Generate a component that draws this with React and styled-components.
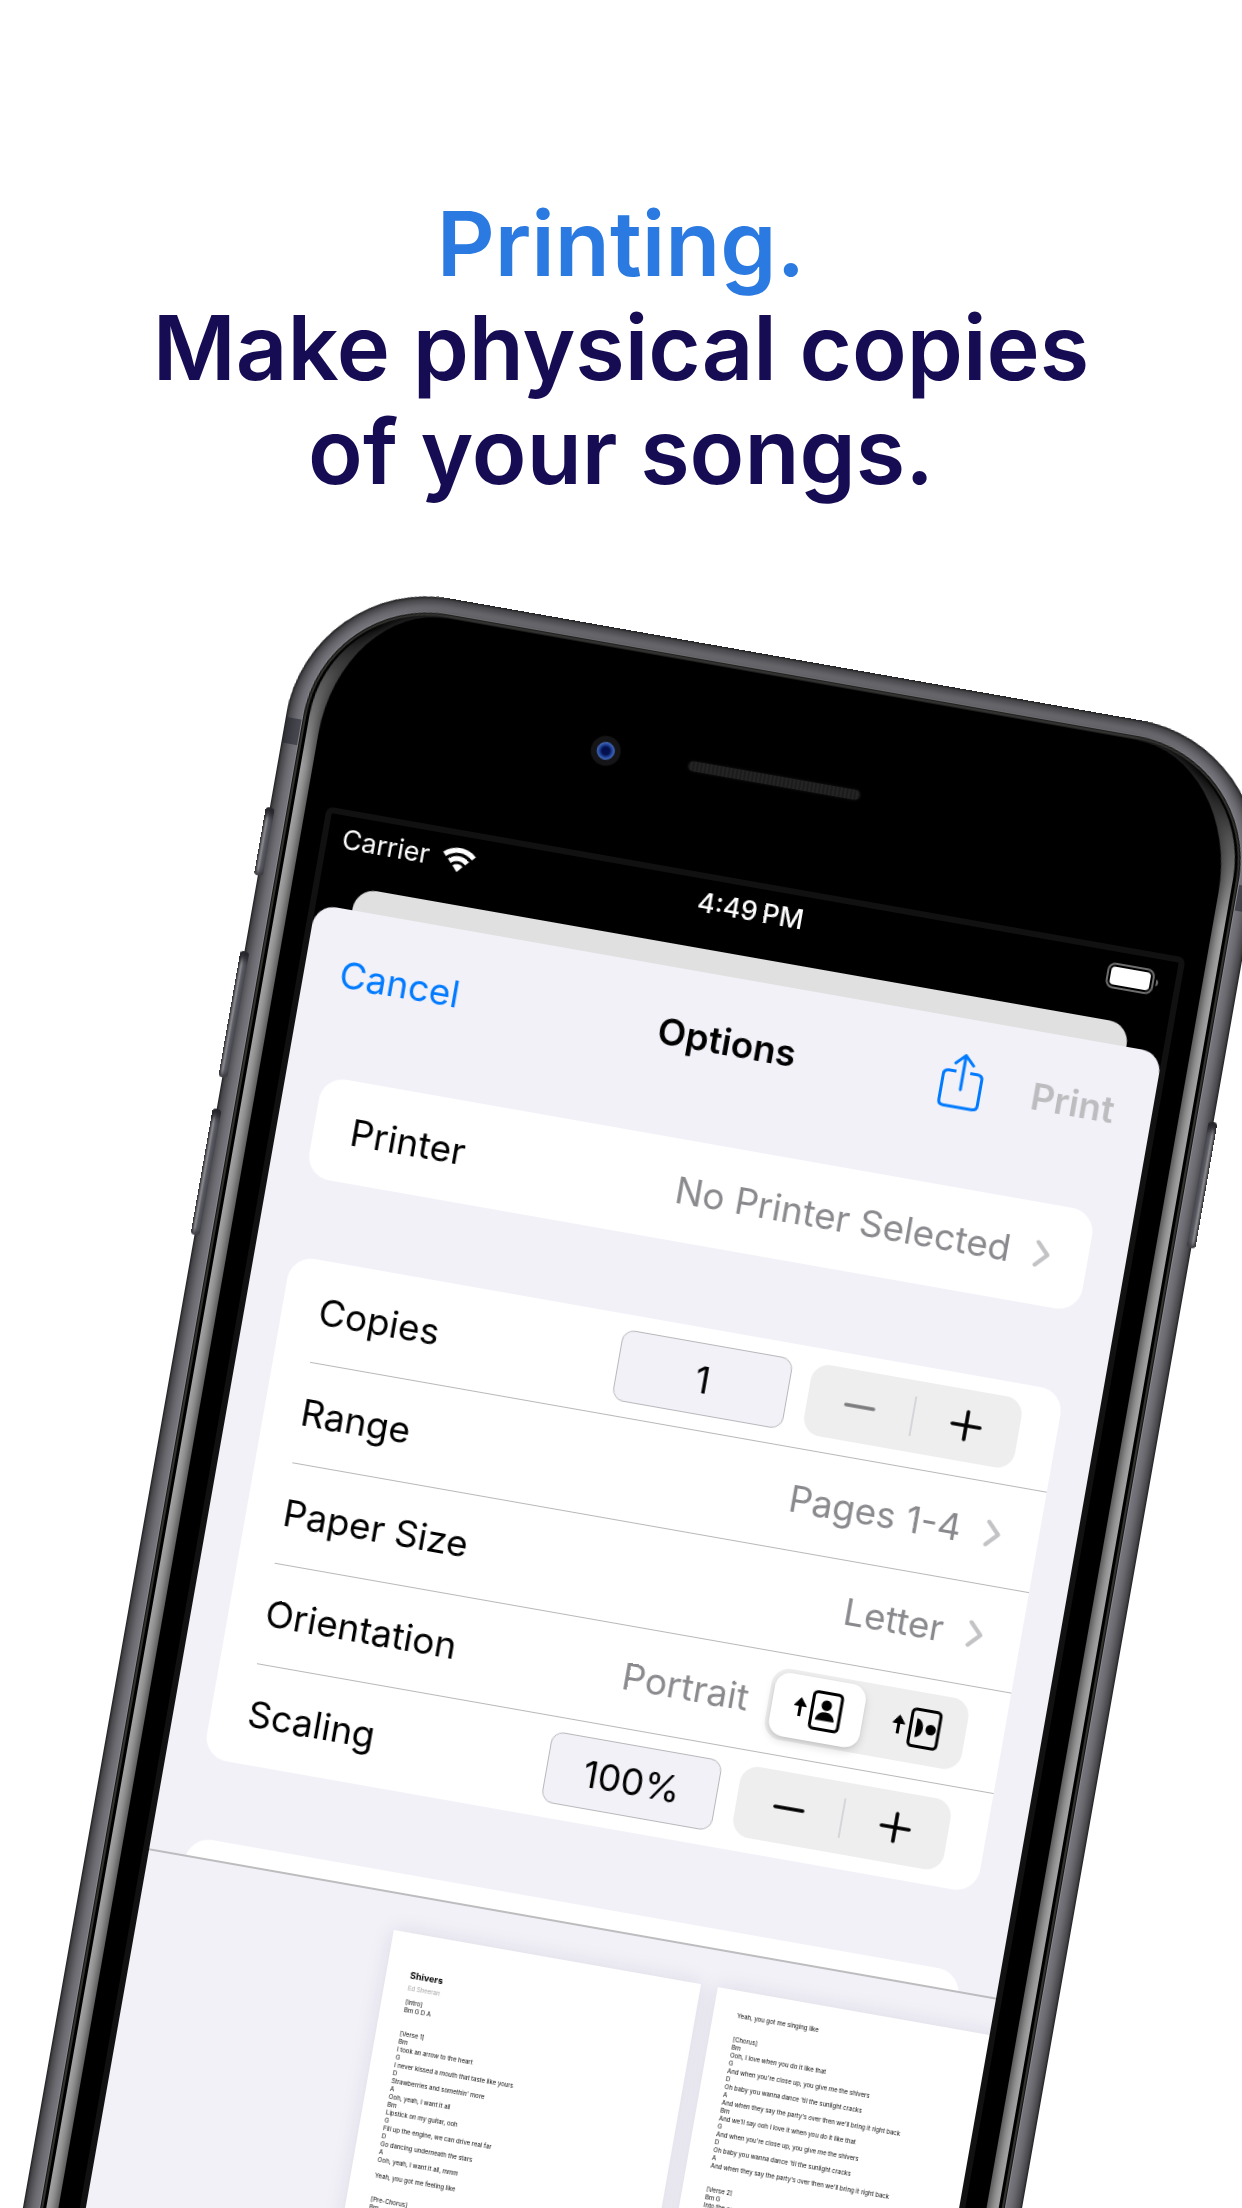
import React, { useState } from "react";
import styled, { createGlobalStyle, css } from "styled-components";

const GlobalStyle = createGlobalStyle`
  *, *::before, *::after { box-sizing: border-box; }
  body { margin: 0; background: #ffffff; }
  button, input { font: inherit; color: inherit; }
`;

const Poster = styled.main`
  display: flex;
  flex-direction: column;
  height: 100vh;
  overflow: hidden;
  background: #ffffff;
  font-family: Inter, "Liberation Sans", sans-serif;
`;

const Headline = styled.h1`
  flex: none;
  height: 574px;
  margin: 0;
  padding-top: 192px;
  color: #160c54;
  font-size: 90px;
  font-weight: 600;
  line-height: 104px;
  text-align: center;
`;

const Accent = styled.span`
  color: #2b7ae1;
`;

const Stage = styled.section`
  flex: 1;
  min-height: 0;
  padding-left: 25%;
`;

/* Device */

const Phone = styled.div`
  position: relative;
  width: 984px;
  height: 2000px;
  transform: rotate(10deg);
  transform-origin: 0 0;
  will-change: transform;
`;

const Metal = styled.div`
  position: relative;
  height: 100%;
  padding: 16px 17px;
  border-radius: 142px;
  background: #7b7a81;
  box-shadow: inset 0 0 2px 1px #1d1d1f, inset 0 0 13px 5px #29292b;
`;

const Rim = styled.div`
  position: relative;
  height: 100%;
  padding: 3px;
  border-radius: 125px;
  border: 1px solid #131312;
  background: #000000;
  box-shadow: inset 0 0 0 2px #33332f, 0 0 0 1px #86858c;
`;

const Reflection = styled.div`
  height: 100%;
  margin: 0 2px;
  padding: 0 12px;
  border-radius: 120px;
  background: linear-gradient(#000000 20px, #555555 80px, #a6a6a6 170px);
`;

const Face = styled.div`
  height: 100%;
  padding: 0 21px;
  border-radius: 108px / 136px;
  background: #000000;
  box-shadow: 0 0 12px 2px #333333;
`;

const AntennaBand = styled.span`
  position: absolute;
  top: 145px;
  ${(p) => p.$side}: 0;
  width: 17px;
  height: 26px;
  background: rgba(38, 40, 48, 0.6);
`;

const SideKey = styled.span`
  position: absolute;
  top: ${(p) => p.$top}px;
  ${(p) => p.$side}: -4px;
  z-index: 1;
  width: 9px;
  height: ${(p) => p.$height}px;
  border-radius: 4px;
  background: linear-gradient(
    ${(p) => (p.$side === "left" ? "to right" : "to left")},
    #2b2b2e, #96969a 3px, #5c5d65 5px, #4a4a52
  );
  box-shadow: inset 0 12px 6px -4px #26262b, inset 0 -6px 5px -3px #3a3a3f;
`;

const Sensors = styled.div`
  display: grid;
  grid-template-columns: 1fr 174px 1fr;
  align-items: center;
  height: 206px;
`;

const Camera = styled.span`
  justify-self: end;
  width: 30px;
  height: 30px;
  margin-right: 69px;
  border: 6px solid #151517;
  border-radius: 50%;
  background: radial-gradient(circle, #04104e 30%, #1d3f92 48%, #4a70c4 70%);
`;

const Speaker = styled.span`
  height: 10px;
  border-radius: 5px;
  background: repeating-linear-gradient(to right, #1c1c1c 0 2px, #242424 2px 4px);
  box-shadow: 0 0 3px #1c1c1c;
`;

const Display = styled.div`
  display: flex;
  flex-direction: column;
  height: 1560px;
  overflow: hidden;
  border: 6px solid #111111;
  border-radius: 7px;
  background: #000000;
`;

/* Status bar */

const StatusBar = styled.div`
  display: grid;
  grid-template-columns: 1fr auto 1fr;
  align-items: center;
  height: 48px;
  margin-bottom: 21px;
  padding: 0 16px 0 15px;
  color: #ffffff;
  font-size: 27px;
  line-height: 32px;
`;

const Carrier = styled.div`
  display: flex;
  align-items: center;
  gap: 12px;
`;

const Clock = styled.time`
  font-weight: 500;
`;

const BatteryIcon = styled.svg`
  justify-self: end;
`;

const PreviousSheet = styled.div`
  flex: none;
  height: 23px;
  margin: 0 37px;
  border-radius: 21px 21px 0 0;
  background: #e0e0e0;
`;

/* Print sheet */

const Sheet = styled.section`
  flex: 1;
  display: flex;
  flex-direction: column;
  min-height: 0;
  border-radius: 21px 21px 0 0;
  background: #f2f1f8;
  color: #000000;
  font-size: 37px;
  line-height: 44px;
`;

const NavBar = styled.header`
  flex: none;
  display: grid;
  grid-template-columns: 1fr auto 1fr;
  align-items: center;
  height: 130px;
  padding: 0 38px 0 36px;
`;

const Title = styled.h2`
  margin: 0;
  font-size: 37px;
  font-weight: 600;
`;

const NavActions = styled.div`
  display: flex;
  align-items: center;
  justify-content: flex-end;
  gap: 50px;
`;

const NavButton = styled.button`
  display: flex;
  justify-self: start;
  padding: 0;
  border: 0;
  background: none;
  color: #007aff;
  font-weight: ${(p) => (p.$strong ? 600 : 400)};

  &:disabled { color: #bdbdc0; }
`;

const Options = styled.form`
  flex: none;
  display: flex;
  flex-direction: column;
  gap: 80px;
  height: 829px;
  padding: 38px 38px 0 37px;
  overflow: hidden;
`;

const Group = styled.div`
  flex: none;
  min-height: 102px;
  padding-left: 37px;
  border-radius: 24px;
  background: #ffffff;
`;

const Row = styled.div`
  display: flex;
  align-items: center;
  justify-content: space-between;
  height: 102px;
  padding-right: 38px;

  & + & { box-shadow: inset 0 1px 0 #b8b8bb; }
`;

const Controls = styled.div`
  display: flex;
  align-items: center;
  gap: 20px;
`;

const Disclosure = styled.button`
  display: flex;
  align-items: center;
  gap: 24px;
  padding: 0;
  border: 0;
  background: none;
  color: #8a8a8e;
`;

const Value = styled.span`
  color: #8a8a8e;
`;

const Field = styled.input`
  width: 173px;
  height: 72px;
  padding: 0;
  border: 1px solid #b8b8bb;
  border-radius: 12px;
  background: #f2f1f8;
  text-align: center;
`;

const pill = css`
  display: flex;
  height: 72px;
  border-radius: 18px;
  background: #eeeeef;
`;

const StepperBox = styled.div`
  ${pill}
  align-items: center;
  width: 214px;
`;

const StepButton = styled.button`
  flex: 1;
  display: flex;
  align-items: center;
  justify-content: center;
  height: 72px;
  padding: 0;
  border: 0;
  background: none;

  &:disabled { color: #7b7b7d; }
`;

const StepDivider = styled.span`
  width: 2px;
  height: 40px;
  background: #d6d5da;
`;

const Segments = styled.div`
  ${pill}
  gap: 8px;
  width: 200px;
  padding: 4px;
`;

const Segment = styled.label`
  flex: 1;
  display: flex;
  align-items: center;
  justify-content: center;
  border-radius: 15px;

  &:has(input:checked) {
    background: #ffffff;
    box-shadow: 0 4px 10px rgba(0, 0, 0, 0.14), 0 1px 3px rgba(0, 0, 0, 0.08);
  }
`;

const HiddenRadio = styled.input`
  appearance: none;
  width: 0;
  height: 0;
  margin: 0;
`;

/* Preview */

const Preview = styled.div`
  flex: 1;
  display: flex;
  gap: 17px;
  min-height: 0;
  padding: 36px 0 0 255px;
  border-top: 2px solid #bdbdbf;
  overflow: hidden;
`;

const Paper = styled.article`
  flex: none;
  width: 312px;
  height: 404px;
  padding: ${(p) => (p.$first ? 36 : 21)}px 24px 0;
  background: #ffffff;
  box-shadow: 0 0 20px rgba(30, 30, 60, 0.1);
  color: #000000;
  font-size: 6px;
  line-height: 8px;
`;

const SongTitle = styled.h3`
  margin: 0;
  font-size: 9px;
  line-height: 12px;
`;

const Artist = styled.p`
  margin: 2px 0 6px;
  color: #a4a4a6;
  font-size: 6px;
  line-height: 9px;
`;

const Lyrics = styled.pre`
  margin: 0;
  font: inherit;
`;

const PAGE_ONE = `[Intro]
Bm G D A


[Verse 1]
Bm
I took an arrow to the heart
G
I never kissed a mouth that taste like yours
D
Strawberries and somethin' more
A
Ooh, yeah, I want it all
Bm
Lipstick on my guitar, ooh
G
Fill up the engine, we can drive real far
D
Go dancing underneath the stars
A
Ooh, yeah, I want it all, mmm

Yeah, you got me feeling like


[Pre-Chorus]
Bm`;

const PAGE_TWO = `Yeah, you got me singing like


[Chorus]
Bm
Ooh, I love when you do it like that
G
And when you're close up, you give me the shivers
D
Oh baby you wanna dance 'til the sunlight cracks
A
And when they say the party's over then we'll bring it right back
Bm
And we'll say ooh I love it when you do it like that
G
And when you're close up, you give me the shivers
D
Oh baby you wanna dance 'til the sunlight cracks
A
And when they say the party's over then we'll bring it right back


[Verse 2]
Bm G
Into the car`;

function WifiIcon() {
  return (
    <svg width="34" height="25" viewBox="0 0 34 25" fill="#ffffff" aria-hidden="true">
      <path d="M17 0C10.500 0 4.600 2.500 0.300 6.600L3.900 10.300C7.300 7.100 11.900 5.100 17 5.100S26.700 7.100 30.100 10.300L33.700 6.600C29.400 2.500 23.500 0 17 0Z" />
      <path d="M17 8.300C12.800 8.300 9 9.900 6.200 12.600L9.700 16.200C11.600 14.400 14.200 13.300 17 13.300S22.400 14.400 24.300 16.200L27.800 12.600C25 9.900 21.200 8.300 17 8.300Z" />
      <path d="M17 16.300C15 16.300 13.200 17.100 11.900 18.400L17 24.200L22.100 18.400C20.800 17.100 19 16.300 17 16.300Z" />
    </svg>
  );
}

function Battery() {
  return (
    <BatteryIcon width="53" height="26" viewBox="0 0 53 26" aria-label="Battery full">
      <rect x="1" y="1" width="46" height="24" rx="7" fill="none" stroke="#6e6e6e" strokeWidth="2" />
      <rect x="4" y="4" width="40" height="18" rx="4" fill="#ffffff" />
      <path d="M50 9.500c1.600.6 2.200 2 2.200 3.500s-.6 2.900-2.200 3.500z" fill="#6e6e6e" />
    </BatteryIcon>
  );
}

function ShareIcon() {
  return (
    <svg width="42" height="60" viewBox="0 0 42 60" fill="none" stroke="#007aff" strokeWidth="3" strokeLinecap="round" strokeLinejoin="round" aria-hidden="true">
      <path d="M14 18.500H6.500Q1.500 18.500 1.500 23.500V49Q1.500 54 6.500 54H35.500Q40.500 54 40.500 49V23.500Q40.500 18.500 35.500 18.500H28" strokeLinecap="butt" />
      <path d="M21 36V1.500M12 10.500L21 1.500L30 10.500" />
    </svg>
  );
}

function Chevron() {
  return (
    <svg width="16" height="28" viewBox="0 0 16 28" fill="none" stroke="#c3c3c6" strokeWidth="4" strokeLinecap="round" strokeLinejoin="round" aria-hidden="true">
      <path d="M2.500 2.500L13.500 14L2.500 25.500" />
    </svg>
  );
}

function StepIcon({ plus }) {
  return (
    <svg width="32" height="32" viewBox="0 0 32 32" fill="none" stroke="currentColor" strokeWidth="3.600" strokeLinecap="round" aria-hidden="true">
      <path d={plus ? "M2 16H30M16 2V30" : "M2 16H30"} />
    </svg>
  );
}

function OrientationIcon({ landscape }) {
  return (
    <svg width="49" height="40" viewBox="0 0 49 40" aria-hidden="true">
      <path d="M6.500 29V15" fill="none" stroke="#000000" strokeWidth="3" />
      <path d="M6.500 10.500L12.500 18.500H0.500Z" stroke="#000000" strokeWidth="1" strokeLinejoin="round" />
      <rect x="18.500" y="1.500" width="28.500" height="37" rx="4" fill="none" stroke="#000000" strokeWidth="3" />
      {landscape ? (
        <g>
          <path d="M24 10.500C28.500 11 31 15 31 20S28.500 29 24 29.500Z" />
          <circle cx="39" cy="20" r="5.200" />
        </g>
      ) : (
        <g>
          <circle cx="32.500" cy="14" r="5.200" />
          <path d="M23 29.500C23.500 24 27.500 20.800 32.500 20.800S41.500 24 42 29.500Z" />
        </g>
      )}
    </svg>
  );
}

function Stepper({ name, onStep, atMinimum }) {
  return (
    <StepperBox>
      <StepButton type="button" aria-label={`Decrease ${name}`} disabled={atMinimum} onClick={() => onStep(-1)}>
        <StepIcon />
      </StepButton>
      <StepDivider />
      <StepButton type="button" aria-label={`Increase ${name}`} onClick={() => onStep(1)}>
        <StepIcon plus />
      </StepButton>
    </StepperBox>
  );
}

function DisclosureRow({ label, value }) {
  return (
    <Row>
      <span>{label}</span>
      <Disclosure type="button" aria-label={`${label}: ${value}`}>
        {value}
        <Chevron />
      </Disclosure>
    </Row>
  );
}

function PrintOptions() {
  const [copies, setCopies] = useState(1);
  const [scale, setScale] = useState(100);
  const [orientation, setOrientation] = useState("Portrait");

  return (
    <Options onSubmit={(e) => e.preventDefault()}>
      <Group>
        <DisclosureRow label="Printer" value="No Printer Selected" />
      </Group>
      <Group>
        <Row>
          <label htmlFor="copies">Copies</label>
          <Controls>
            <Field id="copies" inputMode="numeric" value={copies} onChange={(e) => setCopies(Number(e.target.value) || 1)} />
            <Stepper name="copies" atMinimum={copies <= 1} onStep={(d) => setCopies(copies + d)} />
          </Controls>
        </Row>
        <DisclosureRow label="Range" value="Pages 1-4" />
        <DisclosureRow label="Paper Size" value="Letter" />
        <Row>
          <span id="orientation">Orientation</span>
          <Controls>
            <Value>{orientation}</Value>
            <Segments role="radiogroup" aria-labelledby="orientation">
              {["Portrait", "Landscape"].map((name) => (
                <Segment key={name}>
                  <HiddenRadio
                    type="radio"
                    name="orientation"
                    aria-label={name}
                    checked={orientation === name}
                    onChange={() => setOrientation(name)}
                  />
                  <OrientationIcon landscape={name === "Landscape"} />
                </Segment>
              ))}
            </Segments>
          </Controls>
        </Row>
        <Row>
          <label htmlFor="scaling">Scaling</label>
          <Controls>
            <Field id="scaling" value={`${scale}%`} onChange={(e) => setScale(parseInt(e.target.value, 10) || 100)} />
            <Stepper name="scaling" onStep={(d) => setScale(scale + d)} />
          </Controls>
        </Row>
      </Group>
      <Group />
    </Options>
  );
}

export default function App() {
  return (
    <Poster>
      <GlobalStyle />
      <Headline>
        <Accent>Printing.</Accent>
        <br />
        Make physical copies
        <br />
        of your songs.
      </Headline>
      <Stage>
        <Phone>
          <SideKey $side="left" $top={237} $height={69} />
          <SideKey $side="left" $top={383} $height={128} />
          <SideKey $side="left" $top={543} $height={128} />
          <SideKey $side="right" $top={383} $height={128} />
          <Metal>
            <AntennaBand $side="left" />
            <AntennaBand $side="right" />
            <Rim>
              <Reflection>
                <Face>
                  <Sensors>
                    <Camera />
                    <Speaker />
                  </Sensors>
                  <Display>
                    <StatusBar>
                      <Carrier>
                        Carrier
                        <WifiIcon />
                      </Carrier>
                      <Clock>4:49&#8201;PM</Clock>
                      <Battery />
                    </StatusBar>
                    <PreviousSheet />
                    <Sheet>
                      <NavBar>
                        <NavButton type="button">Cancel</NavButton>
                        <Title>Options</Title>
                        <NavActions>
                          <NavButton type="button" aria-label="Share">
                            <ShareIcon />
                          </NavButton>
                          <NavButton type="button" $strong disabled>
                            Print
                          </NavButton>
                        </NavActions>
                      </NavBar>
                      <PrintOptions />
                      <Preview>
                        <Paper $first>
                          <SongTitle>Shivers</SongTitle>
                          <Artist>Ed Sheeran</Artist>
                          <Lyrics>{PAGE_ONE}</Lyrics>
                        </Paper>
                        <Paper>
                          <Lyrics>{PAGE_TWO}</Lyrics>
                        </Paper>
                      </Preview>
                    </Sheet>
                  </Display>
                </Face>
              </Reflection>
            </Rim>
          </Metal>
        </Phone>
      </Stage>
    </Poster>
  );
}
